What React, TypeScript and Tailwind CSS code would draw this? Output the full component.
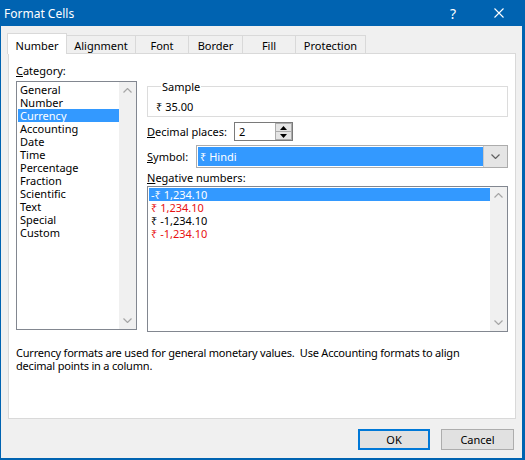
import React from "react";

function Chevron({ up, color = "#a6a6a6" }: { up?: boolean; color?: string }) {
  return (
    <svg width="9" height="5" viewBox="0 0 9 5">
      <polyline
        points={up ? "0.5,4.5 4.5,0.5 8.5,4.5" : "0.5,0.5 4.5,4.5 8.5,0.5"}
        fill="none"
        stroke={color}
        strokeWidth="1.2"
      />
    </svg>
  );
}

function Tri({ up }: { up?: boolean }) {
  return (
    <svg width="7" height="4" viewBox="0 0 7 4">
      <polygon points={up ? "0,4 3.5,0 7,4" : "0,0 7,0 3.5,4"} fill="#000" />
    </svg>
  );
}

export default function App() {
  const cats = [
    "General",
    "Number",
    "Currency",
    "Accounting",
    "Date",
    "Time",
    "Percentage",
    "Fraction",
    "Scientific",
    "Text",
    "Special",
    "Custom",
  ];
  const negs = [
    { t: "-₹ 1,234.10", red: false, sel: true },
    { t: "₹ 1,234.10", red: true, sel: false },
    { t: "₹ -1,234.10", red: false, sel: false },
    { t: "₹ -1,234.10", red: true, sel: false },
  ];
  const tabs = [
    { t: "Alignment", w: "w-[70px]" },
    { t: "Font", w: "w-[54px]" },
    { t: "Border", w: "w-[55px]" },
    { t: "Fill", w: "w-[54px]" },
    { t: "Protection", w: "w-[71px]" },
  ];
  return (
    <div className="w-[525px] h-[460px] bg-[#0063b1] flex flex-col font-['Noto_Sans',sans-serif] text-[11px] leading-[13px] text-black overflow-hidden whitespace-nowrap">
      {/* title bar */}
      <div className="h-[26px] shrink-0 flex items-center text-white text-[12px]">
        <span className="ml-[4px]">Format Cells</span>
        <div className="ml-auto w-[46px] h-[26px] flex items-center justify-center text-[14px]">?</div>
        <div className="w-[46px] h-[26px] mr-[3px] flex items-center justify-center">
          <svg width="10" height="10" viewBox="0 0 10 10">
            <path d="M0.5 0.5 L9.5 9.5 M9.5 0.5 L0.5 9.5" stroke="#fff" strokeWidth="1.1" />
          </svg>
        </div>
      </div>

      {/* body */}
      <div className="flex-1 ml-[1px] mr-[3px] mb-[2px] bg-[#f0f0f0] flex flex-col pt-[7px]">
        {/* tabs */}
        <div className="flex items-end pl-[6px] h-[21px] relative z-10">
          <div className="w-[60px] h-[21px] bg-white border border-b-0 border-[#d9d9d9] flex items-center justify-center pt-[2px]">
            Number
          </div>
          {tabs.map((tb) => (
            <div
              key={tb.t}
              className={`${tb.w} h-[18px] -ml-[1px] mb-[1px] border border-b-0 border-[#d9d9d9] flex items-center justify-center pt-[2px]`}
            >
              {tb.t}
            </div>
          ))}
        </div>

        {/* panel */}
        <div className="ml-[7px] -mt-[1px] w-[508px] h-[366px] bg-white border border-[#d9d9d9] flex flex-col pl-[7px] pt-[10px]">
          <div className="flex items-start">
            {/* left column */}
            <div className="w-[121px] flex flex-col">
              <div>
                <span className="underline">C</span>ategory:
              </div>
              <div className="mt-[4px] h-[249px] border border-[#828790] flex">
                <div className="flex-1 pl-[1px] pt-[1px] flex flex-col">
                  {cats.map((c) => (
                    <div
                      key={c}
                      className={`h-[13px] pl-[2px] ${c === "Currency" ? "bg-[#3399ff] text-white" : ""}`}
                    >
                      {c}
                    </div>
                  ))}
                </div>
                <div className="w-[17px] bg-[#f0f0f0] flex flex-col justify-between items-center py-[6px]">
                  <Chevron up />
                  <Chevron />
                </div>
              </div>
            </div>

            {/* right column */}
            <div className="ml-[10px] w-[361px] flex flex-col mt-[16px]">
              <fieldset className="border border-[#dcdcdc] pl-[8px] pt-[7px] pb-[3px]">
                <legend className="ml-[5px] px-[1px]">Sample</legend>
                <div>₹ 35.00</div>
              </fieldset>

              <div className="mt-[5px] flex items-center">
                <div className="w-[87px]">
                  <span className="underline">D</span>ecimal places:
                </div>
                <div className="w-[59px] h-[19px] border border-[#7a7a7a] flex items-center">
                  <span className="pl-[4px] flex-1">2</span>
                  <div className="w-[17px] h-[17px] flex flex-col">
                    <div className="h-[9px] bg-[#e5e5e5] border border-[#acacac] flex items-center justify-center">
                      <Tri up />
                    </div>
                    <div className="h-[8px] bg-[#e5e5e5] border border-t-0 border-[#acacac] flex items-center justify-center">
                      <Tri />
                    </div>
                  </div>
                </div>
              </div>

              <div className="mt-[4px] flex items-center">
                <div className="w-[49px]">
                  <span className="underline">S</span>ymbol:
                </div>
                <div className="w-[312px] h-[23px] border border-[#acacac] bg-white flex p-[1px]">
                  <div className="flex-1 bg-[#3399ff] text-white flex items-center pl-[2px]">₹ Hindi</div>
                  <div className="w-[24px] bg-[#e5e5e5] border-l border-[#c9c9c9] flex items-center justify-center -my-[1px] -mr-[1px]">
                    <Chevron color="#606060" />
                  </div>
                </div>
              </div>

              <div className="mt-[3px]">
                <span className="underline">N</span>egative numbers:
              </div>
              <div className="mt-[2px] h-[146px] border border-[#828790] flex">
                <div className="flex-1 pl-[1px] pt-[1px] flex flex-col">
                  {negs.map((n, i) => (
                    <div
                      key={i}
                      className={`h-[13px] pl-[2px] ${n.sel ? "bg-[#3399ff] text-white" : n.red ? "text-[#e81010]" : ""}`}
                    >
                      {n.t}
                    </div>
                  ))}
                </div>
                <div className="w-[17px] bg-[#f0f0f0] flex flex-col justify-between items-center py-[6px]">
                  <Chevron up />
                  <Chevron />
                </div>
              </div>
            </div>
          </div>

          <div className="mt-[14px] whitespace-pre tracking-[-0.2px]">
            {"Currency formats are used for general monetary values.  Use Accounting formats to align"}
            <br />
            {"decimal points in a column."}
          </div>
        </div>

        {/* buttons */}
        <div className="mt-[10px] flex justify-end pr-[8px] gap-[11px]">
          <div className="w-[72px] h-[21px] bg-[#e1e1e1] border-2 border-[#0078d7] flex items-center justify-center">
            OK
          </div>
          <div className="w-[73px] h-[21px] bg-[#e1e1e1] border border-[#adadad] flex items-center justify-center">
            Cancel
          </div>
        </div>
      </div>
    </div>
  );
}
